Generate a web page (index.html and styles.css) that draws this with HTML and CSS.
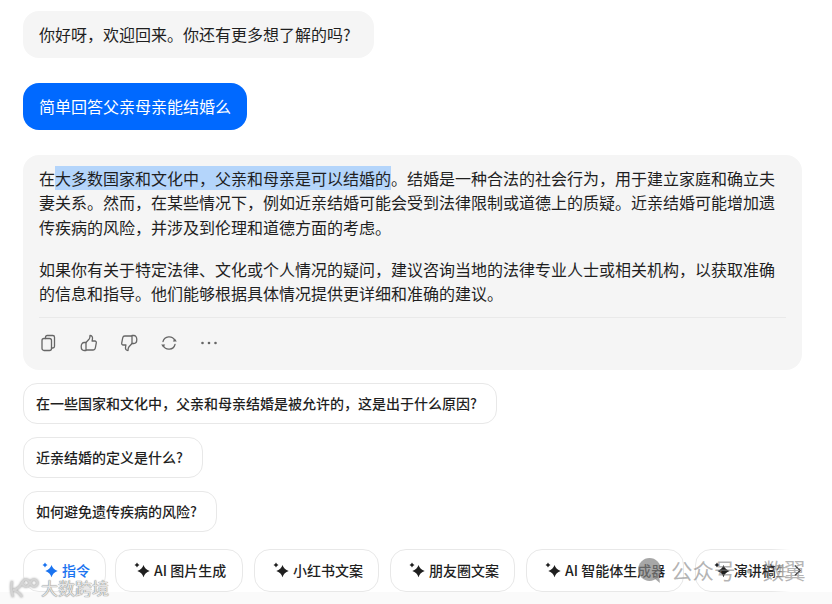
FILE: index.html
```html
<!DOCTYPE html>
<html lang="zh-CN">
<head>
  <meta charset="UTF-8" />
  <meta name="viewport" content="width=device-width, initial-scale=1.0"/>
  <title>Chat</title>
  <link rel="stylesheet" href="styles.css">
</head>
<body>

  <svg class="icon-defs" width="0" height="0">
    <symbol id="sparkle" viewBox="0 0 16 16">
      <path d="M9.500 3Q11 7.500 15.700 9 11 10.500 9.500 15.200 8 10.500 3.300 9 8 7.500 9.500 3z" fill="currentColor"/>
      <path d="M3 .4Q3.600 2.300 5.500 2.900 3.600 3.500 3 5.400 2.400 3.500.5 2.900 2.400 2.300 3 .4z" fill="currentColor"/>
    </symbol>
  </svg>

  <main class="chat">
    <div class="bubble bubble-bot">你好呀，欢迎回来。你还有更多想了解的吗?</div>
    <div class="bubble bubble-user">简单回答父亲母亲能结婚么</div>

    <!-- Answer -->
    <section class="answer">
      <p>在<span class="selected">大多数国家和文化中，父亲和母亲是可以结婚的</span>。结婚是一种合法的社会行为，用于建立家庭和确立夫妻关系。然而，在某些情况下，例如近亲结婚可能会受到法律限制或道德上的质疑。近亲结婚可能增加遗传疾病的风险，并涉及到伦理和道德方面的考虑。</p>
      <p>如果你有关于特定法律、文化或个人情况的疑问，建议咨询当地的法律专业人士或相关机构，以获取准确的信息和指导。他们能够根据具体情况提供更详细和准确的建议。</p>
      <div class="actions">
        <svg class="action" viewBox="0 0 18 18"><rect x="2" y="4.500" width="9.500" height="12" rx="2"/><path d="M5.500 4.500V3.200c0-1 .7-1.700 1.700-1.700h5.600c1 0 1.700.7 1.700 1.700v9.100c0 1-.7 1.700-1.700 1.700h-1.300"/></svg>
        <svg class="action" viewBox="0 0 18 18"><path d="M6 8.500l3-3.200c.7-.8 1-1.900 1-3.800 1.800 0 2.700 1.200 2.500 3l-.4 2.500h2.700c1.100 0 1.700.9 1.500 1.900l-1 5.300c-.2 1-1 1.800-2.100 1.800H6z"/><path d="M6 8.500H4.200C2.500 8.500 1.200 10.200 1.200 12.500s1.300 4 3 4H6"/></svg>
        <svg class="action" viewBox="0 0 18 18"><path d="M12 9.500l-3 3.200c-.7.8-1 1.900-1 3.800-1.800 0-2.700-1.200-2.500-3l.4-2.500H3.200c-1.100 0-1.700-.9-1.500-1.900l1-5.300c.2-1 1-1.800 2.100-1.800H12z"/><path d="M12 9.500h1.800c1.700 0 3-1.700 3-4s-1.300-4-3-4H12"/></svg>
        <svg class="action" viewBox="0 0 18 18"><path d="M3 7.500a6.300 6.300 0 0 1 11.800-1"/><path d="M15 10.500a6.300 6.300 0 0 1-11.800 1"/><path class="solid" d="M12.800 7.400h4l-2-3zM5.200 10.600h-4l2 3z"/></svg>
        <svg class="action" viewBox="0 0 18 18"><circle class="solid" cx="2.500" cy="9" r="1.300"/><circle class="solid" cx="9" cy="9" r="1.300"/><circle class="solid" cx="15.500" cy="9" r="1.300"/></svg>
      </div>
    </section>

    <!-- Suggested questions -->
    <div class="suggestions">
      <div class="chip">在一些国家和文化中，父亲和母亲结婚是被允许的，这是出于什么原因?</div>
      <div class="chip">近亲结婚的定义是什么?</div>
      <div class="chip">如何避免遗传疾病的风险?</div>
    </div>

    <!-- Tools -->
    <div class="tools">
      <div class="tool tool-active"><svg class="spark"><use href="#sparkle"/></svg>指令</div>
      <div class="tool tool-ai"><svg class="spark"><use href="#sparkle"/></svg>AI 图片生成</div>
      <div class="tool"><svg class="spark"><use href="#sparkle"/></svg>小红书文案</div>
      <div class="tool"><svg class="spark"><use href="#sparkle"/></svg>朋友圈文案</div>
      <div class="tool tool-wide"><svg class="spark"><use href="#sparkle"/></svg>AI 智能体生成器</div>
      <div class="tool"><svg class="spark"><use href="#sparkle"/></svg>演讲稿生成</div>
      <div class="tools-fade"><svg viewBox="0 0 10 14"><path d="M2 1.500L8 7l-6 5.500"/></svg></div>
    </div>
  </main>

  <div class="footer-strip"></div>

  <!-- Watermarks -->
  <div class="mark-left"><svg viewBox="0 0 32 24"><path d="M4 5c-1 5-1 10 1 16M5 14c5-1 8-4 9-8M5 14c4 1 7 3 9 7"/><circle cx="18" cy="7" r="3.500"/><circle cx="26" cy="7" r="3.500"/></svg>大数跨境</div>
  <div class="mark-right">
    <svg class="mark-bubble" viewBox="0 0 26 26"><circle cx="13" cy="12" r="11"/><path d="M17 20l6 5-1-9z"/></svg>
    <span>公众号</span><span class="mark-gap">·</span><span>数翼</span>
  </div>

</body>
</html>
```

FILE: styles.css
```css
html, body {
  margin: 0;
  padding: 0;
  background: #fff;
  overflow: hidden;
}

body {
  position: relative;
  width: 832px;
  height: 604px;
  font-family: "Noto Sans CJK SC", "Noto Sans", sans-serif;
  color: #1f1f1f;
}

.icon-defs {
  position: absolute;
}

.chat {
  display: flex;
  flex-direction: column;
  align-items: flex-start;
  padding: 11px 30px 0 23px;
}

.bubble {
  box-sizing: border-box;
  height: 47px;
  padding: 0 16px 2px;
  display: flex;
  align-items: center;
  border-radius: 16px;
  font-size: 16px;
  white-space: nowrap;
  margin-bottom: 25px;
}

.bubble-bot {
  width: 351px;
  background: #f5f5f5;
}

.bubble-user {
  width: 224px;
  background: #0069ff;
  color: #fff;
}

.answer {
  box-sizing: border-box;
  width: 779px;
  height: 215px;
  padding: 10.500px 16px 0;
  background: #f5f5f5;
  border-radius: 16px;
  font-size: 16px;
  line-height: 24.500px;
}

.answer p {
  margin: 0 0 17.500px;
}

.selected {
  background: #b4d5fb;
}

.actions {
  display: flex;
  align-items: center;
  gap: 22px;
  margin-top: -6.500px;
  padding: 16px 0 0 1px;
  border-top: 1px solid #e9e9e9;
}

.action {
  width: 18px;
  height: 18px;
  fill: none;
  stroke: #666;
  stroke-width: 1.300;
  stroke-linejoin: round;
  stroke-linecap: round;
}

.action .solid {
  fill: #666;
  stroke: none;
}

.suggestions {
  display: flex;
  flex-direction: column;
  align-items: flex-start;
  gap: 13px;
  margin-top: 13px;
}

.chip {
  box-sizing: border-box;
  height: 41px;
  padding: 0 19px 2px 12px;
  display: flex;
  align-items: center;
  background: #fff;
  border: 1px solid #e8e8e8;
  border-radius: 14px;
  font-size: 14px;
  font-weight: 500;
}

.tools {
  position: relative;
  display: flex;
  gap: 11px;
  width: 779px;
  margin-top: 17px;
  overflow: hidden;
}

.tool {
  box-sizing: border-box;
  flex: none;
  height: 43px;
  padding: 0 15px 2px 18px;
  display: flex;
  align-items: center;
  gap: 4px;
  background: #fff;
  border: 1px solid #e8e8e8;
  border-radius: 16px;
  font-size: 14px;
  font-weight: 500;
  white-space: nowrap;
}

.tool-ai {
  padding-right: 15.800px;
}

.tool-wide {
  padding-right: 17.500px;
}

.tool-active {
  width: 83px;
  margin-right: -2px;
  color: #1a73f0;
}

.spark {
  width: 16px;
  height: 16px;
  flex: none;
}

.tools-fade {
  position: absolute;
  top: 0;
  right: 0;
  bottom: 0;
  width: 30px;
  display: flex;
  align-items: center;
  justify-content: flex-end;
  background: linear-gradient(90deg, rgba(255, 255, 255, 0), #fff 60%);
}

.tools-fade svg {
  width: 9px;
  height: 13px;
  fill: none;
  stroke: #333;
  stroke-width: 1.300;
}

.footer-strip {
  position: absolute;
  left: 0;
  right: 0;
  bottom: 0;
  height: 12px;
  background: #fafafa;
}

.mark-left {
  position: absolute;
  left: 8px;
  top: 576px;
  display: flex;
  align-items: center;
  gap: 1px;
  font-size: 17px;
  line-height: 24px;
  color: #e4e4e4;
  text-shadow: 0 0 1px #777, 0 0 1px #999;
}

.mark-left svg {
  width: 32px;
  height: 24px;
  fill: none;
  stroke: #d4d4d4;
  stroke-width: 2.200;
  filter: drop-shadow(0 0 1px #999);
}

.mark-right {
  position: absolute;
  left: 636px;
  top: 554px;
  display: flex;
  align-items: center;
  font-size: 21.500px;
  line-height: 32px;
  color: rgba(130, 130, 130, 0.6);
  white-space: nowrap;
}

.mark-bubble {
  width: 27px;
  height: 27px;
  margin-right: 8px;
  fill: rgba(130, 130, 130, 0.7);
}

.mark-gap {
  width: 27px;
  text-align: center;
}
```
